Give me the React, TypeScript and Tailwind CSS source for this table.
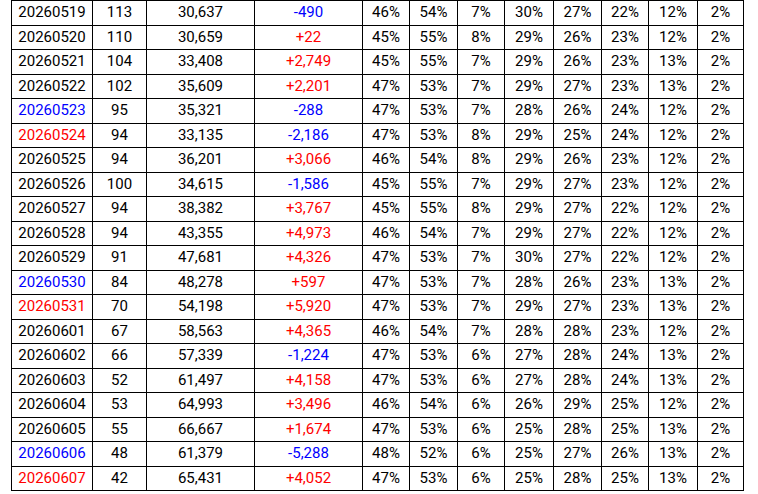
type Row = [string, "k" | "b" | "r", number, string, string, number, number, number, number, number, number, number, number];

const rows: Row[] = [
  ["20260519", "k", 113, "30,637", "-490", 46, 54, 7, 30, 27, 22, 12, 2],
  ["20260520", "k", 110, "30,659", "+22", 45, 55, 8, 29, 26, 23, 12, 2],
  ["20260521", "k", 104, "33,408", "+2,749", 45, 55, 7, 29, 26, 23, 13, 2],
  ["20260522", "k", 102, "35,609", "+2,201", 47, 53, 7, 29, 27, 23, 13, 2],
  ["20260523", "b", 95, "35,321", "-288", 47, 53, 7, 28, 26, 24, 12, 2],
  ["20260524", "r", 94, "33,135", "-2,186", 47, 53, 8, 29, 25, 24, 12, 2],
  ["20260525", "k", 94, "36,201", "+3,066", 46, 54, 8, 29, 26, 23, 12, 2],
  ["20260526", "k", 100, "34,615", "-1,586", 45, 55, 7, 29, 27, 23, 12, 2],
  ["20260527", "k", 94, "38,382", "+3,767", 45, 55, 8, 29, 27, 22, 12, 2],
  ["20260528", "k", 94, "43,355", "+4,973", 46, 54, 7, 29, 27, 22, 12, 2],
  ["20260529", "k", 91, "47,681", "+4,326", 47, 53, 7, 30, 27, 22, 12, 2],
  ["20260530", "b", 84, "48,278", "+597", 47, 53, 7, 28, 26, 23, 13, 2],
  ["20260531", "r", 70, "54,198", "+5,920", 47, 53, 7, 29, 27, 23, 13, 2],
  ["20260601", "k", 67, "58,563", "+4,365", 46, 54, 7, 28, 28, 23, 12, 2],
  ["20260602", "k", 66, "57,339", "-1,224", 47, 53, 6, 27, 28, 24, 13, 2],
  ["20260603", "k", 52, "61,497", "+4,158", 47, 53, 6, 27, 28, 24, 13, 2],
  ["20260604", "k", 53, "64,993", "+3,496", 46, 54, 6, 26, 29, 25, 12, 2],
  ["20260605", "k", 55, "66,667", "+1,674", 47, 53, 6, 25, 28, 25, 13, 2],
  ["20260606", "b", 48, "61,379", "-5,288", 48, 52, 6, 25, 27, 26, 13, 2],
  ["20260607", "r", 42, "65,431", "+4,052", 47, 53, 6, 25, 28, 25, 13, 2],
];

const dateColor = { k: "text-black", b: "text-[#0000ff]", r: "text-[#ff0000]" };

export default function App() {
  return (
    <div className="h-[494px] w-[758px] overflow-hidden bg-white pl-[11px] font-['Roboto',sans-serif] text-[15px] text-black">
      <table className="w-[733px] table-fixed border-collapse text-center">
        <colgroup>
          <col className="w-[81px]" />
          <col className="w-[54px]" />
          <col className="w-[108px]" />
          <col className="w-[108px]" />
          <col className="w-[47px]" />
          <col className="w-[48px]" />
          <col className="w-[47px]" />
          <col className="w-[49px]" />
          <col className="w-[48px]" />
          <col className="w-[47px]" />
          <col className="w-[49px]" />
          <col className="w-[46px]" />
        </colgroup>
        <tbody>
          {rows.map((r) => (
            <tr key={r[0]} className="h-[24.5px]">
              <td className={`border border-black p-0 leading-none ${dateColor[r[1]]}`}>{r[0]}</td>
              <td className="border border-black p-0 leading-none">{r[2]}</td>
              <td className="border border-black p-0 leading-none">{r[3]}</td>
              <td
                className={`border border-black p-0 leading-none ${
                  r[4].startsWith("-") ? "text-[#0000ff]" : "text-[#ff0000]"
                }`}
              >
                {r[4]}
              </td>
              {r.slice(5).map((v, i) => (
                <td key={i} className="border border-black p-0 leading-none">
                  {v}%
                </td>
              ))}
            </tr>
          ))}
        </tbody>
      </table>
    </div>
  );
}
